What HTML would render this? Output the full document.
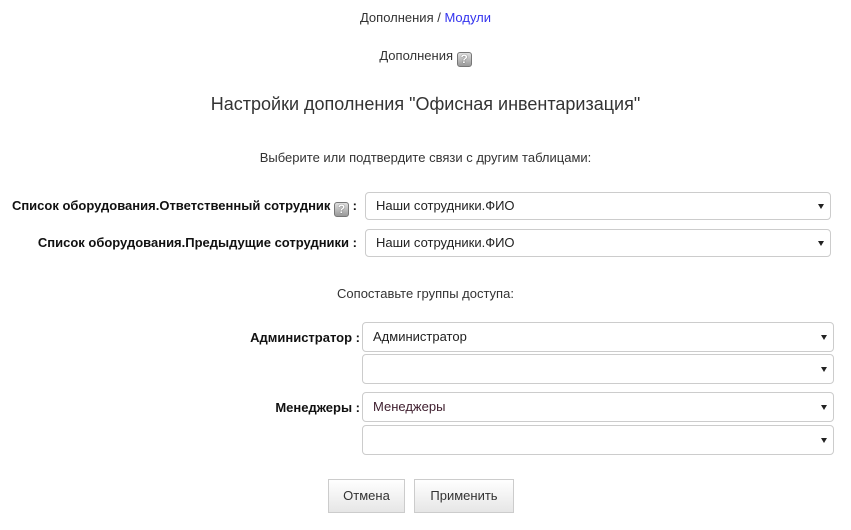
<!DOCTYPE html>
<html><head><meta charset="utf-8"><style>
*{box-sizing:border-box;margin:0;padding:0}
body{width:851px;height:530px;background:#fff;font-family:"Liberation Sans",sans-serif;font-size:13px;color:#333;position:relative;overflow:hidden}
.a{position:absolute;white-space:nowrap}
.c{left:0;width:851px;text-align:center}
.q{display:inline-block;width:15px;height:15px;border:1px solid #777;border-radius:3px;background:linear-gradient(#e0e0e0,#999);color:#fff;font-size:12px;font-weight:bold;line-height:13px;text-align:center;vertical-align:-3px;text-shadow:0 0 1px #222}
.lbl{font-weight:bold;color:#111;text-align:right}
.sel{position:absolute;border:1px solid #ccc;border-radius:4px;background:#fff;padding-left:10px;color:#222}
.sel:after{content:"";position:absolute;right:6px;top:50%;margin-top:-2px;border-left:3.5px solid transparent;border-right:3.5px solid transparent;border-top:5px solid #222}
.btn{position:absolute;border:1px solid #ccc;background:linear-gradient(#fff,#e6e6e6);color:#333;text-align:center;font-size:13px}
</style></head><body>
<div class="a c" style="top:10px">Дополнения / <span style="color:#3333ee">Модули</span></div>
<div class="a c" style="top:48px">Дополнения <span class="q">?</span></div>
<div class="a c" style="top:94px;font-size:18px;color:#333">Настройки дополнения "Офисная инвентаризация"</div>
<div class="a c" style="top:150px">Выберите или подтвердите связи с другим таблицами:</div>

<div class="a lbl" style="right:494px;top:198px">Список оборудования.Ответственный сотрудник <span class="q">?</span> :</div>
<div class="sel" style="left:365px;top:192px;width:466px;height:28px;line-height:26px">Наши сотрудники.ФИО</div>
<div class="a lbl" style="right:494px;top:235px">Список оборудования.Предыдущие сотрудники :</div>
<div class="sel" style="left:365px;top:229px;width:466px;height:28px;line-height:26px">Наши сотрудники.ФИО</div>

<div class="a c" style="top:286px">Сопоставьте группы доступа:</div>

<div class="a lbl" style="right:491px;top:330px">Администратор :</div>
<div class="sel" style="left:362px;top:322px;width:472px;height:30px;line-height:28px">Администратор</div>
<div class="sel" style="left:362px;top:354px;width:472px;height:30px"></div>
<div class="a lbl" style="right:491px;top:400px">Менеджеры :</div>
<div class="sel" style="left:362px;top:392px;width:472px;height:30px;line-height:28px;color:#402030">Менеджеры</div>
<div class="sel" style="left:362px;top:425px;width:472px;height:30px"></div>

<div class="btn" style="left:328px;top:479px;width:77px;height:34px;line-height:32px">Отмена</div>
<div class="btn" style="left:414px;top:479px;width:100px;height:34px;line-height:32px">Применить</div>
</body></html>
